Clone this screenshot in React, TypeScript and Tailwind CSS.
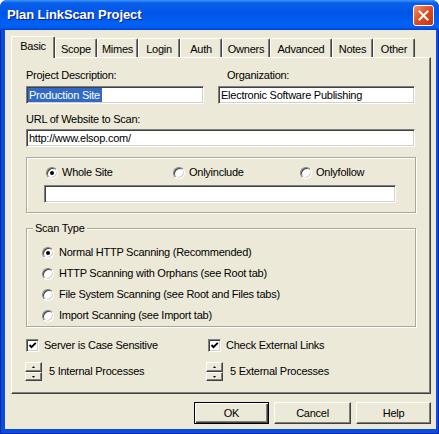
import React from "react";

const raised =
  "border border-t-white border-l-white border-r-[#404040] border-b-[#404040] shadow-[inset_-1px_-1px_0_#808080]";
const sunken =
  "border border-t-[#808080] border-l-[#808080] border-r-white border-b-white shadow-[inset_1px_1px_0_#404040,inset_-1px_-1px_0_#d4d0c8]";
const etched =
  "border border-[#aca899] shadow-[inset_1px_1px_0_#ffffff,1px_1px_0_#ffffff]";

function Radio({ checked }: { checked?: boolean }) {
  return (
    <span
      className={`w-[12px] h-[12px] rounded-full bg-white flex items-center justify-center shrink-0 ${sunken}`}
    >
      {checked && <span className="w-[4px] h-[4px] rounded-full bg-black" />}
    </span>
  );
}

function Check({ checked }: { checked?: boolean }) {
  return (
    <span
      className={`w-[13px] h-[13px] bg-white flex items-center justify-center shrink-0 ${sunken}`}
    >
      {checked && (
        <svg width="9" height="9" viewBox="0 0 9 9">
          <path d="M1.5 4 L3.5 6.2 L7.8 1.8" fill="none" stroke="#000" strokeWidth="1.9" />
        </svg>
      )}
    </span>
  );
}

function Spin() {
  return (
    <span className="flex flex-col w-[17px] h-[19px] shrink-0">
      <span className={`h-[10px] bg-[#ece9d8] flex items-center justify-center ${raised}`}>
        <svg width="3" height="2" viewBox="0 0 3 2">
          <path d="M1.5 0 L3 2 L0 2Z" fill="#000" />
        </svg>
      </span>
      <span className={`h-[9px] bg-[#ece9d8] flex items-center justify-center ${raised}`}>
        <svg width="3" height="2" viewBox="0 0 3 2">
          <path d="M0 0 L3 0 L1.5 2Z" fill="#000" />
        </svg>
      </span>
    </span>
  );
}

function Input({ w, children }: { w: string; children?: React.ReactNode }) {
  return (
    <div className={`${w} h-[18px] bg-white flex items-center px-[2px] overflow-hidden ${sunken}`}>
      {children}
    </div>
  );
}

const tabs: [string, string][] = [
  ["Scope", "w-[42px]"],
  ["Mimes", "w-[41px]"],
  ["Login", "w-[42px]"],
  ["Auth", "w-[42px]"],
  ["Owners", "w-[48px]"],
  ["Advanced", "w-[62px]"],
  ["Notes", "w-[41px]"],
  ["Other", "w-[42px]"],
];

export default function App() {
  return (
    <div className="w-[439px] h-[434px] flex flex-col bg-[#0a4cdc] rounded-t-[7px] overflow-hidden text-[11px] leading-[13px] tracking-[-0.25px] text-black font-['Liberation_Sans',Arial,sans-serif] select-none">
      {/* Title bar */}
      <div className="h-[30px] shrink-0 flex items-center pl-[7px] pr-[5px] bg-[linear-gradient(to_bottom,#3d95ff_0%,#0a5fe8_10%,#0055ea_45%,#0062f5_85%,#0058ea_93%,#003dd7_100%)]">
        <span className="text-white font-bold text-[13px] leading-[16px] tracking-[-0.1px] [text-shadow:1px_1px_0_#0a1f7a] flex-1">
          Plan LinkScan Project
        </span>
        <span className="w-[21px] h-[21px] rounded-[3px] border border-white bg-[linear-gradient(135deg,#f0916f_0%,#e04a20_50%,#c03510_100%)] flex items-center justify-center">
          <svg width="11" height="11" viewBox="0 0 11 11">
            <path d="M1.5 1.5 L9.5 9.5 M9.5 1.5 L1.5 9.5" stroke="#fff" strokeWidth="2" strokeLinecap="square" />
          </svg>
        </span>
      </div>

      {/* Frame */}
      <div className="flex-1 px-[4px] pb-[4px] flex border-x border-b border-[#0a2ab0]">
        <div className="flex-1 bg-[#ece9d8] flex flex-col pt-[6px] pl-[6px] pr-[5px]">
          {/* Tabs */}
          <div className="flex items-end h-[21px]">
            <div className="relative z-10 w-[44px] h-[22px] -mb-[1px] bg-[#ece9d8] border-t border-l border-white border-r border-r-[#404040] shadow-[inset_-1px_0_0_#808080] rounded-t-[2px] flex items-start justify-center pt-[3px]">
              Basic
            </div>
            {tabs.map(([t, w]) => (
              <div
                key={t}
                className={`${w} h-[19px] border-t border-l border-white border-r border-r-[#404040] shadow-[inset_-1px_0_0_#808080] rounded-t-[2px] flex items-start justify-center pt-[4px]`}
              >
                {t}
              </div>
            ))}
          </div>

          {/* Panel */}
          <div className="w-[420px] h-[337px] border border-t-white border-l-white border-r-[#404040] border-b-[#404040] shadow-[inset_-1px_-1px_0_#808080] pl-[14px]">
            <div className="w-[389px] flex flex-col">
              {/* Row 1 */}
              <div className="flex mt-[11px] gap-[14px]">
                <div className="flex flex-col w-[178px]">
                  <span className="h-[13px]">Project Description:</span>
                  <div className="mt-[4px]">
                    <Input w="w-[178px]">
                      <span className="bg-[#316ac5] text-white h-[14px] flex items-center pr-[2px] -ml-[1px] pl-[1px]">
                        Production Site
                      </span>
                    </Input>
                  </div>
                </div>
                <div className="flex flex-col w-[197px]">
                  <span className="h-[13px] ml-[9px]">Organization:</span>
                  <div className="mt-[4px]">
                    <Input w="w-[197px]">Electronic Software Publishing</Input>
                  </div>
                </div>
              </div>

              <span className="h-[13px] mt-[9px]">URL of Website to Scan:</span>
              <div className="mt-[3px]">
                <Input w="w-[389px]">http://www.elsop.com/</Input>
              </div>

              {/* Group 1 */}
              <div className={`mt-[10px] h-[56px] w-[390px] pl-[17px] pt-[8px] ${etched}`}>
                <div className="flex ml-[2px] h-[13px] items-center">
                  <label className="w-[127px] flex items-center gap-[4px]">
                    <Radio checked />
                    <span>Whole Site</span>
                  </label>
                  <label className="w-[127px] flex items-center gap-[4px]">
                    <Radio />
                    <span>Onlyinclude</span>
                  </label>
                  <label className="flex items-center gap-[4px]">
                    <Radio />
                    <span>Onlyfollow</span>
                  </label>
                </div>
                <div className="mt-[6px]">
                  <Input w="w-[352px]" />
                </div>
              </div>

              {/* Group 2 */}
              <div className={`relative mt-[15px] h-[99px] w-[390px] pl-[15px] pt-[17px] ${etched}`}>
                <span className="absolute -top-[7px] left-[6px] px-[2px] bg-[#ece9d8] h-[13px]">
                  Scan Type
                </span>
                <div className="flex flex-col gap-[8px]">
                  {[
                    ["Normal HTTP Scanning (Recommended)", true],
                    ["HTTP Scanning with Orphans (see Root tab)", false],
                    ["File System Scanning (see Root and Files tabs)", false],
                    ["Import Scanning (see Import tab)", false],
                  ].map(([t, c]) => (
                    <label key={t as string} className="flex items-center gap-[5px] h-[13px]">
                      <Radio checked={c as boolean} />
                      <span>{t as string}</span>
                    </label>
                  ))}
                </div>
              </div>

              {/* Checkboxes */}
              <div className="flex mt-[12px] h-[13px] items-center">
                <label className="w-[182px] flex items-center gap-[5px]">
                  <Check checked />
                  <span>Server is Case Sensitive</span>
                </label>
                <label className="flex items-center gap-[5px]">
                  <Check checked />
                  <span>Check External Links</span>
                </label>
              </div>

              {/* Spinners */}
              <div className="flex mt-[10px] h-[19px] items-center -ml-[1px]">
                <div className="w-[181px] flex items-center gap-[7px]">
                  <Spin />
                  <span>5 Internal Processes</span>
                </div>
                <div className="flex items-center gap-[7px]">
                  <Spin />
                  <span>5 External Processes</span>
                </div>
              </div>
            </div>
          </div>

          {/* Buttons */}
          <div className="flex justify-end mt-[8px] gap-[5px]">
            <button className="w-[75px] h-[22px] bg-[#ece9d8] border border-black shadow-[inset_1px_1px_0_#ffffff,inset_-1px_-1px_0_#404040,inset_-2px_-2px_0_#808080] flex items-center justify-center">
              OK
            </button>
            <button className={`w-[77px] h-[22px] bg-[#ece9d8] flex items-center justify-center ${raised}`}>
              Cancel
            </button>
            <button className={`w-[75px] h-[22px] bg-[#ece9d8] flex items-center justify-center ${raised}`}>
              Help
            </button>
          </div>
        </div>
      </div>
    </div>
  );
}
